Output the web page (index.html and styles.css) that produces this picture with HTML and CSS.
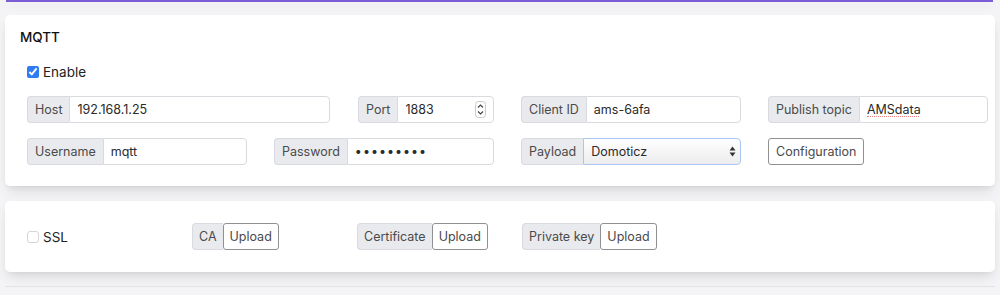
FILE: index.html
```html
<!DOCTYPE html>
<html>
<head>
  <title>MQTT settings</title>
  <meta charset="UTF-8" />
  <link rel="stylesheet" href="styles.css">
</head>
<body>
  <div class="topbar"></div>

  <main class="content">
    <!-- MQTT settings -->
    <div class="cnt">
      <strong class="cnt-title">MQTT</strong>
      <label class="check-row">
        <input type="checkbox" checked /> Enable
      </label>

      <div class="grid-4">
        <div class="host-port">
          <div class="in-group grow">
            <span class="in-pre">Host</span>
            <input class="in-txt" type="text" value="192.168.1.25" />
          </div>
          <div class="in-group port">
            <span class="in-pre">Port</span>
            <span class="in-wrap">
              <input class="in-txt" type="text" value="1883" />
              <svg class="spin" width="11" height="17" viewBox="0 0 11 17">
                <rect x="0.5" y="0.5" width="10" height="16" rx="3" fill="#fff" stroke="#c9c9cc"/>
                <path d="M3 6.5 L5.5 4 L8 6.5" fill="none" stroke="#444" stroke-width="1.2"/>
                <path d="M3 10.5 L5.5 13 L8 10.5" fill="none" stroke="#444" stroke-width="1.2"/>
              </svg>
            </span>
          </div>
        </div>
        <div class="in-group">
          <span class="in-pre">Client ID</span>
          <input class="in-txt" type="text" value="ams-6afa" />
        </div>
        <div class="in-group">
          <span class="in-pre">Publish topic</span>
          <span class="in-wrap">
            <input class="in-txt" type="text" value="AMSdata" />
            <span class="spell-line"></span>
          </span>
        </div>

        <div class="in-group">
          <span class="in-pre">Username</span>
          <input class="in-txt" type="text" value="mqtt" />
        </div>
        <div class="in-group">
          <span class="in-pre">Password</span>
          <input class="in-txt pwd" type="password" value="secretpwd" />
        </div>
        <div class="in-group">
          <span class="in-pre">Payload</span>
          <span class="in-wrap">
            <select class="in-sel">
              <option>Domoticz</option>
              <option>JSON</option>
              <option>Raw</option>
            </select>
            <svg class="sel-arrow" width="7" height="11" viewBox="0 0 7 11">
              <path d="M0.5 4.5 L3.5 0.5 L6.5 4.5 Z" fill="#333"/>
              <path d="M0.5 6.5 L3.5 10.5 L6.5 6.5 Z" fill="#333"/>
            </svg>
          </span>
        </div>
        <div>
          <button class="btn-sec">Configuration</button>
        </div>
      </div>
    </div>

    <!-- SSL -->
    <div class="cnt cnt-ssl">
      <div class="grid-6">
        <label class="check-row light">
          <input type="checkbox" class="box-off" /> SSL
        </label>
        <div class="up-group">
          <span class="in-pre">CA</span>
          <button class="btn-up">Upload</button>
        </div>
        <div class="up-group">
          <span class="in-pre">Certificate</span>
          <button class="btn-up">Upload</button>
        </div>
        <div class="up-group">
          <span class="in-pre">Private key</span>
          <button class="btn-up">Upload</button>
        </div>
      </div>
    </div>
  </main>

  <footer class="foot"></footer>
</body>
</html>
```

FILE: styles.css
```css
body {
  margin: 0;
  background: #f4f4f6;
  font-family: Inter, "Liberation Sans", sans-serif;
  color: #333;
}

.topbar {
  height: 0;
  margin: 0 7px 0 6px;
  border-bottom: 2px solid #7d5dd5;
  box-shadow: 0 4px 10px rgba(0, 0, 0, 0.08);
}

.content {
  padding: 13px 5px 0;
}

.cnt {
  background: #fff;
  border-radius: 5px;
  box-shadow: 0 8px 14px -3px rgba(0, 0, 0, 0.1), 0 3px 6px -3px rgba(0, 0, 0, 0.1);
  padding: 14px 7px 21px 22px;
  margin-bottom: 15px;
}

.cnt-ssl {
  padding: 22px 7px 22px 22px;
  margin-bottom: 0;
}

.cnt-title {
  display: block;
  margin-left: -7px;
  font-size: 13.5px;
  font-weight: 500;
  line-height: 16px;
  color: #111;
}

.check-row {
  display: flex;
  align-items: center;
  gap: 4px;
  margin: 19px 0 16px;
  font-size: 13.5px;
  line-height: 16px;
  color: #222;
}

.check-row.light {
  margin: 0;
}

.check-row input {
  width: 12px;
  height: 12px;
  margin: 0;
  accent-color: #2f7bf5;
}

.check-row .box-off {
  appearance: none;
  border: 1px solid #d4d5d9;
  border-radius: 3px;
  background: #fff;
}

.grid-4 {
  display: grid;
  grid-template-columns: repeat(4, minmax(0, 1fr));
  column-gap: 27px;
  row-gap: 15px;
}

.grid-6 {
  display: grid;
  grid-template-columns: repeat(6, minmax(0, 1fr));
  column-gap: 29px;
  align-items: center;
}

.host-port {
  grid-column: span 2;
  display: flex;
  gap: 28px;
  min-width: 0;
}

.grow {
  flex: 1;
}

.port {
  width: 136px;
}

.in-group, .up-group {
  display: flex;
  height: 27px;
  min-width: 0;
  font-size: 12.5px;
}

.in-pre {
  display: flex;
  align-items: center;
  padding: 0 7px;
  background: #e9eaee;
  border: 1px solid #d8dadf;
  border-right: none;
  border-radius: 4px 0 0 4px;
  color: #4a4a4a;
  white-space: nowrap;
}

.in-wrap {
  position: relative;
  flex: 1;
  display: flex;
  min-width: 0;
}

.in-txt, .in-sel {
  flex: 1;
  width: 0;
  min-width: 0;
  margin: 0;
  padding: 0 7px;
  border: 1px solid #d8dadf;
  border-radius: 0 4px 4px 0;
  font-family: inherit;
  font-size: 12.5px;
  color: #2a2a2a;
  background: #fff;
  outline: none;
}

.in-txt.pwd {
  font-size: 12.5px;
  letter-spacing: 1px;
}

.spell-line {
  position: absolute;
  left: 8px;
  bottom: 6px;
  width: 52px;
  border-bottom: 1px dotted #f08080;
}

.spin {
  position: absolute;
  right: 8px;
  top: 5px;
}

.in-sel {
  appearance: none;
  border-color: #a8c7f5;
  background: linear-gradient(#fff, #ececee);
}

.sel-arrow {
  position: absolute;
  right: 5px;
  top: 8px;
}

.btn-sec, .btn-up {
  height: 27px;
  margin: 0;
  padding: 0 7px;
  background: #fff;
  border: 1px solid #8f9093;
  border-radius: 3px;
  font-family: inherit;
  font-size: 12.5px;
  color: #4a4a4a;
}

.btn-up {
  padding: 0 6px;
}

.up-group .in-pre {
  padding: 0 6px;
}

.foot {
  margin: 14px 5px 0;
  border-top: 1px solid #e2e2e6;
}
```
